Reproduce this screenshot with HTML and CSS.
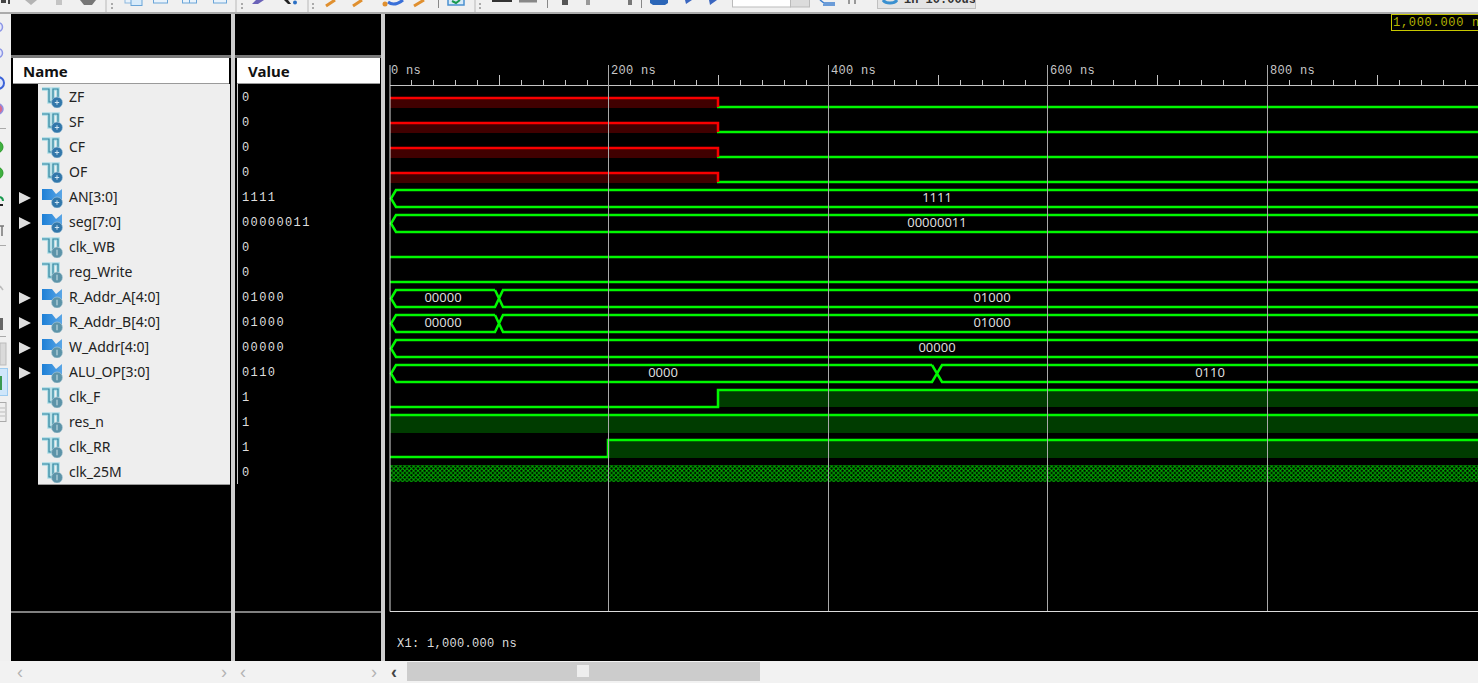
FILE: index.html
```html
<!DOCTYPE html>
<html lang="en">
<head>
<meta charset="utf-8">
<title>Waveform viewer</title>
<link rel="stylesheet" href="styles.css">
</head>
<body>
<svg class="defs" width="0" height="0">
  <defs>
    <linearGradient id="bus" x1="0" y1="0" x2="1" y2="0"><stop offset="0" stop-color="#1d7fd6"/><stop offset="1" stop-color="#5aa6e6"/></linearGradient>
    <symbol id="bit" viewBox="0 0 22 22">
      <path d="M0 3H7V16H11V3H16V11" fill="none" stroke="#a9dbe6" stroke-width="3.500"/>
      <path d="M0 3H7V16H11V3H16V11" fill="none" stroke="#35869f" stroke-width="1.200"/>
    </symbol>
    <symbol id="flag" viewBox="0 0 22 22">
      <path d="M0 3H10L14 8L20 3V14H0Z" fill="url(#bus)"/>
    </symbol>
    <symbol id="out" viewBox="0 0 22 22">
      <circle cx="15" cy="16.500" r="5.500" fill="#3277aa" stroke="#a8c8dc" stroke-width=".6"/>
      <path d="M15 14.300V18.700M12.800 16.500H17.200" stroke="#cfe4f2" stroke-width="1"/>
    </symbol>
    <symbol id="in" viewBox="0 0 22 22">
      <circle cx="15" cy="16.500" r="5.500" fill="#5c93a8" stroke="#b4cdd6" stroke-width=".6"/>
      <path d="M15 13.700V19.300" stroke="#cfe4ea" stroke-width="1"/>
    </symbol>
    <pattern id="fast" width="4.400" height="4.400" patternUnits="userSpaceOnUse">
      <rect width="4.400" height="4.400" fill="#000"/>
      <path d="M0 0L4.400 4.400M4.400 0L0 4.400" stroke="#00b400" stroke-width="1"/>
    </pattern>
  </defs>
</svg>

<header class="toolbar">
  <svg class="tools" width="105" height="12" viewBox="0 0 105 12">
    <path d="M1 0H6V3H1ZM8 0H10V4H8Z" fill="#444"/>
    <path d="M25 0H37L31 5Z" fill="#b4b4b4"/>
    <rect x="56" width="6" height="5" fill="#c4c4c4"/>
    <path d="M80 0H96L92 5H84Z" fill="#777"/>
  </svg>
  <span class="sep"></span>
  <svg class="tools" width="128" height="12" viewBox="107 0 128 12">
    <path d="M111 3h2v2h-2zM111 7h2v2h-2z" fill="#aaa"/>
    <rect x="125" y="-3" width="11" height="6" fill="#e8f2fb" stroke="#8db8de"/>
    <rect x="131" y="-2" width="11" height="7.500" fill="#d8ebfa" stroke="#6aa5d8"/>
    <rect x="153.500" y="-3" width="14" height="6" fill="#eaf3fb" stroke="#6aa5d8"/>
    <rect x="182.500" y="-3" width="14" height="6" fill="#eaf3fb" stroke="#6aa5d8"/>
    <path d="M189.500 0V3" stroke="#6aa5d8"/>
    <rect x="213.500" y="-3" width="13" height="6" fill="#eaf3fb" stroke="#6aa5d8"/>
  </svg>
  <span class="sep"></span>
  <svg class="tools" width="70" height="12" viewBox="237 0 70 12">
    <path d="M241 3h2v2h-2zM241 7h2v2h-2z" fill="#aaa"/>
    <path d="M264 0L258 4H252L256 0Z" fill="#6a62b8"/>
    <path d="M284 0H288L291 4H288Z" fill="#222"/>
    <circle cx="295" cy="2.500" r="2" fill="#2a6fc4"/>
  </svg>
  <span class="sep"></span>
  <svg class="tools" width="165" height="12" viewBox="309 0 165 12">
    <path d="M312 3h2v2h-2zM312 7h2v2h-2z" fill="#aaa"/>
    <path d="M335 0L326 6M362 0L353 6M424 0L414 6" stroke="#e09030" stroke-width="3" fill="none"/>
    <path d="M388 2Q394 7 403 0" stroke="#3a70d8" stroke-width="3" fill="none"/>
    <circle cx="385" cy="4" r="2.500" fill="#e09030"/>
    <path d="M438.500 0V8" stroke="#888"/>
    <rect x="448" y="-4" width="16" height="9" fill="#d8eaf8" stroke="#4a90d0" stroke-width="1.500"/>
    <path d="M452 1L456 3L460 0" stroke="#1a9a50" stroke-width="2" fill="none"/>
  </svg>
  <span class="sep"></span>
  <svg class="tools" width="395" height="12" viewBox="476 0 395 12">
    <path d="M479 3h2v2h-2zM479 7h2v2h-2z" fill="#aaa"/>
    <rect x="492" width="20" height="2" fill="#333"/>
    <rect x="519" width="18" height="2.500" fill="#888"/>
    <path d="M547.500 0V8" stroke="#888"/>
    <rect x="562" width="6" height="5" fill="#555"/>
    <rect x="586" width="4" height="5" fill="#999"/>
    <rect x="628" width="4" height="5" fill="#777"/>
    <path d="M641.500 0V8" stroke="#888"/>
    <path d="M650 0H668V3L665 5H653L650 3Z" fill="#2b66b8"/>
    <path d="M685 0H692L686 4Z M709 0H717L710 5Z" fill="#3a66c0"/>
    <rect x="732.500" y="-2" width="58" height="9" fill="#fff" stroke="#bbb"/>
    <rect x="790.500" y="-2" width="19" height="9" fill="#dcdcdc" stroke="#bbb"/>
    <path d="M820 0L824 3H835M823 5H835" stroke="#3f80d0" stroke-width="1.500" fill="none"/>
    <path d="M849 0V4M855 0V4" stroke="#999" stroke-width="2"/>
  </svg>
  <span class="sep-thin"></span>
  <div class="tool-btn">
    <svg width="16" height="12" viewBox="0 0 16 12"><path d="M1 0Q3 3 8 3Q13 3 15 0" fill="none" stroke="#3a90d0" stroke-width="3"/></svg>
    <span class="tool-btn-text">in 10.00us</span>
  </div>
</header>

<main class="main">
  <svg class="rail" width="11" height="647" viewBox="0 14 11 647">
    <g fill="#e6e8fb" stroke="#8c96e6" stroke-width="1.500"><circle cx="-2" cy="27" r="4.500"/><circle cx="-2" cy="53" r="4.500"/></g>
    <circle cx="-2" cy="83" r="6" fill="#dfe6fa" stroke="#3a62d8" stroke-width="2"/>
    <circle cx="-2" cy="109" r="5" fill="#d86a90" stroke="#9090e0" stroke-width="1.500"/>
    <path d="M0 128.500H6M0 245.500H6M0 336.500H6" stroke="#aaa"/>
    <circle cx="-3" cy="147" r="6" fill="#40b040" stroke="#2a9a2a"/>
    <circle cx="-3" cy="173" r="6" fill="#40b040" stroke="#2a9a2a"/>
    <path d="M0 197Q3 198 3 201" stroke="#1a9a50" stroke-width="2" fill="none"/>
    <path d="M0 205H3" stroke="#222" stroke-width="2"/>
    <path d="M0 226H4M2 226V236" stroke="#777" stroke-width="1.500" fill="none"/>
    <path d="M0 286L3 290" stroke="#bbb" stroke-width="1.500"/>
    <rect x="0" y="318" width="3" height="12" fill="#666"/>
    <rect x="0" y="343" width="6" height="22" fill="#dadada" stroke="#bbb"/>
    <rect x="-2" y="368.500" width="9.500" height="27" fill="#cfe6fa" stroke="#9ccbf0"/>
    <path d="M1 376V390" stroke="#3a9a50" stroke-width="2"/>
    <rect x="-2" y="402.500" width="8" height="19" fill="#eee" stroke="#aaa"/>
    <path d="M0 408H5M0 412H5M0 416H5" stroke="#bbb"/>
  </svg>

  <section class="pane pane-names">
    <div class="pane-top"></div>
    <div class="list-head">Name</div>
    <div class="list">
      <div class="row"><span class="twist"></span><span class="name"><svg class="ico"><use href="#bit"/><use href="#out"/></svg>ZF</span></div>
      <div class="row"><span class="twist"></span><span class="name"><svg class="ico"><use href="#bit"/><use href="#out"/></svg>SF</span></div>
      <div class="row"><span class="twist"></span><span class="name"><svg class="ico"><use href="#bit"/><use href="#out"/></svg>CF</span></div>
      <div class="row"><span class="twist"></span><span class="name"><svg class="ico"><use href="#bit"/><use href="#out"/></svg>OF</span></div>
      <div class="row"><span class="twist open"></span><span class="name"><svg class="ico"><use href="#flag"/><use href="#out"/></svg>AN[3:0]</span></div>
      <div class="row"><span class="twist open"></span><span class="name"><svg class="ico"><use href="#flag"/><use href="#out"/></svg>seg[7:0]</span></div>
      <div class="row"><span class="twist"></span><span class="name"><svg class="ico"><use href="#bit"/><use href="#in"/></svg>clk_WB</span></div>
      <div class="row"><span class="twist"></span><span class="name"><svg class="ico"><use href="#bit"/><use href="#in"/></svg>reg_Write</span></div>
      <div class="row"><span class="twist open"></span><span class="name"><svg class="ico"><use href="#flag"/><use href="#in"/></svg>R_Addr_A[4:0]</span></div>
      <div class="row"><span class="twist open"></span><span class="name"><svg class="ico"><use href="#flag"/><use href="#in"/></svg>R_Addr_B[4:0]</span></div>
      <div class="row"><span class="twist open"></span><span class="name"><svg class="ico"><use href="#flag"/><use href="#in"/></svg>W_Addr[4:0]</span></div>
      <div class="row"><span class="twist open"></span><span class="name"><svg class="ico"><use href="#flag"/><use href="#in"/></svg>ALU_OP[3:0]</span></div>
      <div class="row"><span class="twist"></span><span class="name"><svg class="ico"><use href="#bit"/><use href="#in"/></svg>clk_F</span></div>
      <div class="row"><span class="twist"></span><span class="name"><svg class="ico"><use href="#bit"/><use href="#in"/></svg>res_n</span></div>
      <div class="row"><span class="twist"></span><span class="name"><svg class="ico"><use href="#bit"/><use href="#in"/></svg>clk_RR</span></div>
      <div class="row"><span class="twist"></span><span class="name"><svg class="ico"><use href="#bit"/><use href="#in"/></svg>clk_25M</span></div>
    </div>
    <div class="pane-foot"></div>
  </section>

  <section class="pane pane-values">
    <div class="pane-top"></div>
    <div class="list-head list-head-value">Value</div>
    <div class="list">
      <ul class="vals">
        <li>0</li><li>0</li><li>0</li><li>0</li>
        <li>1111</li><li>00000011</li><li>0</li><li>0</li>
        <li>01000</li><li>01000</li><li>00000</li><li>0110</li>
        <li>1</li><li>1</li><li>1</li><li>0</li>
      </ul>
    </div>
    <div class="pane-foot"></div>
  </section>

  <section class="pane-wave">
    <svg class="wave" width="1093" height="647" viewBox="385 14 1093 647">
      <!-- cursor flag -->
      <rect x="1391.500" y="14.500" width="100" height="16" fill="#000" stroke="#c8c800"/>
      <text class="t-cursor" x="1393" y="26">1,000.000 ns</text>

      <!-- time axis -->
      <text class="t-time" x="391" y="74">0 ns</text>
      <text class="t-time" x="611" y="74">200 ns</text>
      <text class="t-time" x="831" y="74">400 ns</text>
      <text class="t-time" x="1050" y="74">600 ns</text>
      <text class="t-time" x="1270" y="74">800 ns</text>
      <path class="axis" d="M390 85.500H1478"/>
      <path class="axis" d="M411.500 80V85M433.500 80V85M455.500 80V85M477.500 80V85M521.500 80V85M543.500 80V85M565.500 80V85M587.500 80V85M630.500 80V85M652.500 80V85M674.500 80V85M696.500 80V85M740.500 80V85M762.500 80V85M784.500 80V85M806.500 80V85M850.500 80V85M872.500 80V85M894.500 80V85M916.500 80V85M960.500 80V85M982.500 80V85M1003.500 80V85M1025.500 80V85M1069.500 80V85M1091.500 80V85M1113.500 80V85M1135.500 80V85M1179.500 80V85M1201.500 80V85M1223.500 80V85M1245.500 80V85M1289.500 80V85M1311.500 80V85M1333.500 80V85M1355.500 80V85M1399.500 80V85M1421.500 80V85M1443.500 80V85M1465.500 80V85"/>
      <path class="axis" d="M499.500 75V85M718.500 75V85M938.500 75V85M1157.500 75V85M1377.500 75V85"/>

      <!-- fills -->
      <g class="f-x">
        <rect x="390" y="99" width="328" height="9"/>
        <rect x="390" y="124" width="328" height="9"/>
        <rect x="390" y="149" width="328" height="9"/>
        <rect x="390" y="174" width="328" height="9"/>
      </g>
      <g class="f-hi">
        <rect x="718" y="391" width="760" height="16"/>
        <rect x="390" y="416" width="1088" height="17"/>
        <rect x="608" y="441" width="870" height="17"/>
      </g>
      <rect x="390" y="465" width="1088" height="17" fill="url(#fast)"/>

      <!-- undefined to low -->
      <g class="s-green">
        <path d="M717 107H1478M717 132H1478M717 157H1478M717 182H1478"/>
      </g>
      <g class="s-red">
        <path d="M390 98H718V107M390 123H718V132M390 148H718V157M390 173H718V182"/>
      </g>

      <!-- signals -->
      <g class="s-green">
        <path d="M1478 190H396L391 198.500L396 207H1478"/>
        <path d="M1478 215H396L391 223.500L396 232H1478"/>
        <path d="M390 257H1478M390 282H1478"/>
        <path d="M495 290H396L391 298.500L396 307H495L503 290H1478M495 290L503 307H1478"/>
        <path d="M495 315H396L391 323.500L396 332H495L503 315H1478M495 315L503 332H1478"/>
        <path d="M1478 340H396L391 348.500L396 357H1478"/>
        <path d="M932 365H396L391 373.500L396 382H932L942 365H1478M932 365L942 382H1478"/>
        <path d="M390 407H718V390H1478"/>
        <path d="M390 415H1478"/>
        <path d="M390 457H608V440H1478"/>
      </g>

      <!-- bus values -->
      <text class="t-bus" x="937" y="202">1111</text>
      <text class="t-bus" x="937" y="227">00000011</text>
      <text class="t-bus" x="443" y="302">00000</text>
      <text class="t-bus" x="992" y="302">01000</text>
      <text class="t-bus" x="443" y="327">00000</text>
      <text class="t-bus" x="992" y="327">01000</text>
      <text class="t-bus" x="937" y="352">00000</text>
      <text class="t-bus" x="663" y="377">0000</text>
      <text class="t-bus" x="1210" y="377">0110</text>

      <!-- grid -->
      <path class="grid" d="M608.500 65V611M828.500 65V611M1047.500 65V611M1267.500 65V611"/>
      <path class="edge" d="M390 65V611.500H1478"/>

      <text class="t-x1" x="397" y="647">X1: 1,000.000 ns</text>
    </svg>
  </section>
</main>

<footer class="scrolls">
  <div class="sb sb-names"><span class="chev">&#8249;</span><span class="chev">&#8250;</span></div>
  <div class="sb sb-values"><span class="chev">&#8249;</span><span class="chev">&#8250;</span></div>
  <div class="sb-wave">
    <span class="chev chev-dark">&#8249;</span>
    <div class="track"><div class="thumb"></div></div>
  </div>
</footer>
</body>
</html>
```

FILE: styles.css
```css
* { box-sizing: border-box; }

html, body {
  margin: 0;
  width: 1478px;
  height: 683px;
  overflow: hidden;
  background: #f0f0f0;
}

body {
  display: flex;
  flex-direction: column;
  font-family: "Noto Sans", "Open Sans", sans-serif;
}

.defs { position: absolute; }

/* toolbar: only the lower edge of its icons is in view */
.toolbar {
  display: flex;
  align-items: flex-start;
  flex: 0 0 14px;
  border-bottom: 2px solid #ababab;
  overflow: hidden;
}

.tools { display: block; flex: none; }

.sep {
  flex: 0 0 2px;
  height: 12px;
  background: #d4d4d4;
}

.sep-thin { flex: 0 0 6px; }

.tool-btn {
  display: flex;
  align-items: flex-end;
  gap: 6px;
  width: 99px;
  height: 9px;
  padding-left: 4px;
  overflow: hidden;
  background: #e4e4e4;
  border: 1px solid #c0c0c0;
  border-top: 0;
}

.tool-btn svg { flex: none; margin-bottom: -4px; }

.tool-btn-text {
  font: bold 12px/12px "Liberation Mono", monospace;
  color: #333;
  margin-bottom: 2px;
  white-space: nowrap;
}

/* main panes */
.main {
  display: flex;
  flex: 0 0 647px;
  gap: 4px;
  background: #cfcfcf;
}

.rail {
  display: block;
  flex: none;
  margin-right: -4px;
  background: #f0f0f0;
}

.pane {
  display: flex;
  flex-direction: column;
  flex: none;
  background: #000;
}

.pane-names { width: 220px; }
.pane-values { width: 146px; }

.pane-top {
  flex: 0 0 44px;
  border-bottom: 3px solid #7a7a7a;
}

.list-head {
  flex: 0 0 26px;
  min-height: 0;
  height: 26px;
  margin: 0 2px;
  padding-left: 10px;
  overflow: hidden;
  background: #fff;
  border-bottom: 1px solid #9a9a9a;
  color: #111;
  font-size: 15px;
  font-weight: 700;
  line-height: 26px;
}

.list-head-value { margin: 0 1px 0 2px; padding-left: 11px; }

.list { flex: 0 0 527px; min-height: 0; }

.row {
  display: flex;
  height: 25px;
}

.twist {
  display: flex;
  flex: 0 0 27px;
  align-items: center;
  padding-top: 2px;
  padding-left: 8px;
}

.twist.open::before {
  content: "";
  border-left: 12px solid #dedede;
  border-top: 6.5px solid transparent;
  border-bottom: 6.5px solid transparent;
}

.name {
  display: flex;
  flex: 0 0 192px;
  align-items: center;
  gap: 5px;
  padding-left: 4px;
  background: #eeeeee;
  color: #222;
  font-size: 14px;
  white-space: nowrap;
}

.row:last-child .name { box-shadow: 0 1px 0 #9a9a9a; }

.ico {
  display: block;
  flex: none;
  width: 22px;
  height: 22px;
}

.ico use { width: 22px; height: 22px; }

.vals {
  margin: 0 0 0 2px;
  padding: 0 0 0 4px;
  list-style: none;
  border-left: 1px solid #c8c8c8;
  color: #dedede;
  font: 12px/29px "Liberation Mono", monospace;
  letter-spacing: 1.4px;
}

.vals li { height: 25px; }

.pane-foot {
  flex: 1;
  min-height: 0;
  border-top: 2px solid #808080;
}

/* waveform canvas */
.pane-wave {
  flex: 1;
  background: #000;
}

.wave { display: block; }

.f-x rect { fill: #400000; }
.f-hi rect { fill: #003c00; }

.s-green path,
.s-red path {
  fill: none;
  stroke-width: 2.5;
}

.s-green path { stroke: #00f800; }
.s-red path { stroke: #f80000; }

.axis { fill: none; stroke: #c4c4c4; stroke-width: 1; }
.grid { fill: none; stroke: #a8a8a8; stroke-width: 1; }
.edge { fill: none; stroke: #dcdcdc; stroke-width: 1; }

.t-time,
.t-x1,
.t-cursor {
  font-family: "Liberation Mono", monospace;
  font-size: 12px;
  letter-spacing: 0.3px;
}

.t-time { fill: #c8c8c8; }
.t-x1 { fill: #dcdcdc; }
.t-cursor { fill: #b4b400; letter-spacing: 0.7px; }

.t-bus {
  fill: #dcdcdc;
  font-family: "Noto Sans", sans-serif;
  font-size: 13px;
  text-anchor: middle;
}

/* scrollbars */
.scrolls {
  display: flex;
  flex: 1;
  padding-left: 11px;
  background: #f2f2f2;
}

.sb {
  display: flex;
  align-items: center;
  justify-content: space-between;
  flex: none;
}

.sb-names { width: 224px; padding: 0 8px 0 6px; }
.sb-values { width: 150px; padding: 0 8px 0 5px; }

.chev {
  color: #b4b4b4;
  font: 18px/18px "Liberation Sans", sans-serif;
}

.chev-dark {
  flex: 0 0 22px;
  padding-left: 6px;
  color: #444;
  font-weight: 700;
}

.sb-wave {
  display: flex;
  align-items: center;
  flex: 1;
}

.track {
  display: flex;
  align-items: center;
  flex: 0 0 353px;
  height: 19px;
  padding-left: 170px;
  margin-top: -2px;
  background: #cccccc;
}

.thumb {
  width: 12px;
  height: 12px;
  background: #eeeeee;
}
```
